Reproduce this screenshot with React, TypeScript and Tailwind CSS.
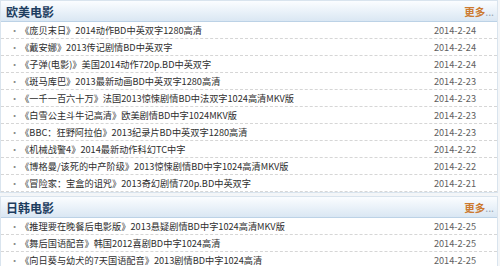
const font = { fontFamily: '"Noto Sans CJK SC", "Noto Sans", sans-serif' };

type Item = { title: string; date: string };

const westernMovies: Item[] = [
  { title: "《庞贝末日》2014动作BD中英双字1280高清", date: "2014-2-24" },
  { title: "《戴安娜》2013传记剧情BD中英双字", date: "2014-2-24" },
  { title: "《子弹(电影)》美国2014动作720p.BD中英双字", date: "2014-2-24" },
  { title: "《斑马库巴》2013最新动画BD中英双字1280高清", date: "2014-2-23" },
  { title: "《一千一百六十万》法国2013惊悚剧情BD中法双字1024高清MKV版", date: "2014-2-23" },
  { title: "《白雪公主斗牛记高清》欧美剧情BD中字1024MKV版", date: "2014-2-23" },
  { title: "《BBC：狂野阿拉伯》2013纪录片BD中英双字1280高清", date: "2014-2-23" },
  { title: "《机械战警4》2014最新动作科幻TC中字", date: "2014-2-22" },
  { title: "《博格曼/该死的中产阶级》2013惊悚剧情BD中字1024高清MKV版", date: "2014-2-22" },
  { title: "《冒险家：宝盒的诅咒》2013奇幻剧情720p.BD中英双字", date: "2014-2-21" },
];

const asianMovies: Item[] = [
  { title: "《推理要在晚餐后电影版》2013悬疑剧情BD中字1024高清MKV版", date: "2014-2-25" },
  { title: "《舞后国语配音》韩国2012喜剧BD中字1024高清", date: "2014-2-25" },
  { title: "《向日葵与幼犬的7天国语配音》2013剧情BD中字1024高清", date: "2014-2-25" },
];

const Section = ({ name, items }: { name: string; items: Item[] }) => (
  <div className="border border-[#d9e4ee] bg-white">
    <div className="flex h-[21px] items-center justify-between border-b border-[#bcd2e6] bg-gradient-to-b from-[#fbfdff] to-[#dae7f3] pl-[5px] pr-[3px]">
      <span className="text-[12px] font-bold leading-[21px] text-[#1d3d5f]">{name}</span>
      <span className="text-[10.5px] font-bold leading-[21px] text-[#cc7a30]">
        更多<span className="font-normal text-[#9aa7b3]">...</span>
      </span>
    </div>
    {items.map((item) => (
      <div
        key={item.title}
        className="flex h-[17px] items-center border-b border-dashed border-[#d6d6d6] pl-[9px] pr-[21px] text-[9.2px] leading-[16px]"
      >
        <span className="mr-[1px] text-[#888]">·</span>
        <span className="whitespace-nowrap text-[#2e2e2e]">{item.title}</span>
        <span className="ml-auto shrink-0 pl-2 text-[#5e5e5e]">{item.date}</span>
      </div>
    ))}
  </div>
);

export default function App() {
  return (
    <div className="flex h-[266px] w-[500px] flex-col gap-[3px] overflow-hidden bg-[#f4f6f8] pr-[2px]" style={font}>
      <Section name="欧美电影" items={westernMovies} />
      <Section name="日韩电影" items={asianMovies} />
    </div>
  );
}
